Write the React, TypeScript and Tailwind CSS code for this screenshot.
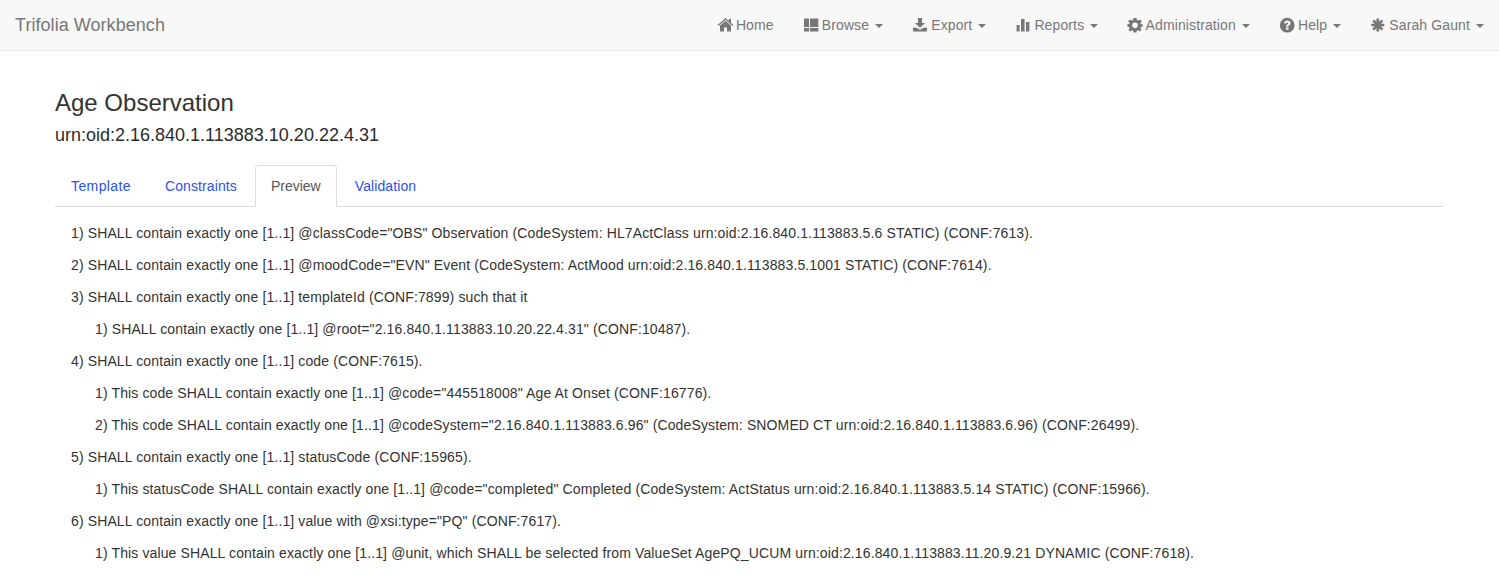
import type { ReactNode } from "react";

const sans = "font-['Liberation_Sans',Arial,sans-serif]";

function Glyph({ children }: { children: ReactNode }) {
  return (
    <svg viewBox="0 0 14 14" className="inline-block w-[14px] h-[14px] relative top-[1px] align-[-1px] fill-current overflow-visible">
      {children}
    </svg>
  );
}

const icons: Record<string, ReactNode> = {
  home: <path d="M7.5 0 L10.8 2.9 V1 H13 V4.9 L15.4 7 L14.6 8 L7.5 1.8 L0.4 8 L-0.4 7 Z M7.5 2.8 L13 7.6 V13.5 H9 V9.5 H6 V13.5 H2 V7.6 Z" />,
  browse: <path d="M0 0.5 H5 V9 H0 Z M6 0.5 H14.3 V9 H6 Z M0 10 H5 V13.5 H0 Z M6 10 H14.3 V13.5 H6 Z" />,
  export: <path d="M5 0 H9 V5 H12.2 L7 9.7 L1.8 5 H5 Z M0 9.8 H3.6 L7 12 L10.4 9.8 H14 V13.5 H0 Z" />,
  reports: <path d="M0.6 7 H3.6 V13.5 H0.6 Z M5 1 H8.6 V13.5 H5 Z M10 4 H13.4 V13.5 H10 Z" />,
  admin: (
    <path
      fillRule="evenodd"
      d="M5.5 0 H8.5 L8.9 2 L10.3 2.6 L12 1.4 L13.9 3.4 L12.4 4.9 L12.9 6 L14.6 6.2 V8.8 L12.9 9 L12.4 10.2 L13.6 11.7 L11.7 13.5 L10 12.2 L8.8 12.7 L8.5 14.4 H5.5 L5.2 12.7 L4 12.2 L2.3 13.5 L0.4 11.7 L1.6 10.2 L1.1 9 L-0.6 8.8 V6.2 L1.1 6 L1.6 4.9 L0.1 3.4 L2 1.4 L3.7 2.6 L5.1 2 Z M7 4.5 A2.8 2.8 0 1 0 7 10.1 A2.8 2.8 0 1 0 7 4.5 Z"
    />
  ),
  help: (
    <path
      fillRule="evenodd"
      d="M7.2 -0.2 A7.4 7.4 0 1 0 7.2 14.6 A7.4 7.4 0 1 0 7.2 -0.2 Z M7.3 2.6 C9.3 2.6 10.5 3.6 10.5 5.2 C10.5 6.3 9.9 6.9 9.1 7.4 C8.5 7.8 8.3 8 8.3 8.7 H6.1 C6.1 7.5 6.5 6.9 7.3 6.4 C7.9 6 8.2 5.8 8.2 5.3 C8.2 4.8 7.8 4.5 7.2 4.5 C6.6 4.5 6.2 4.9 6.1 5.6 L4 5.3 C4.2 3.6 5.4 2.6 7.3 2.6 Z M6 9.5 H8.4 V11.7 H6 Z"
    />
  ),
  user: <path stroke="currentColor" strokeWidth="2.7" d="M6.8 0.5 V13.5 M0.3 7 H13.3 M2.2 2.4 L11.4 11.6 M11.4 2.4 L2.2 11.6" />,
};

const navItems = [
  { label: "Home", icon: "home", caret: false },
  { label: "Browse", icon: "browse", caret: true },
  { label: "Export", icon: "export", caret: true },
  { label: "Reports", icon: "reports", caret: true },
  { label: "Administration", icon: "admin", caret: true },
  { label: "Help", icon: "help", caret: true },
  { label: "Sarah Gaunt", icon: "user", caret: true },
];

const rows: { text: string; nested?: boolean }[] = [
  { text: '1) SHALL contain exactly one [1..1] @classCode="OBS" Observation (CodeSystem: HL7ActClass urn:oid:2.16.840.1.113883.5.6 STATIC) (CONF:7613).' },
  { text: '2) SHALL contain exactly one [1..1] @moodCode="EVN" Event (CodeSystem: ActMood urn:oid:2.16.840.1.113883.5.1001 STATIC) (CONF:7614).' },
  { text: "3) SHALL contain exactly one [1..1] templateId (CONF:7899) such that it" },
  { text: '1) SHALL contain exactly one [1..1] @root="2.16.840.1.113883.10.20.22.4.31" (CONF:10487).', nested: true },
  { text: "4) SHALL contain exactly one [1..1] code (CONF:7615)." },
  { text: '1) This code SHALL contain exactly one [1..1] @code="445518008" Age At Onset (CONF:16776).', nested: true },
  { text: '2) This code SHALL contain exactly one [1..1] @codeSystem="2.16.840.1.113883.6.96" (CodeSystem: SNOMED CT urn:oid:2.16.840.1.113883.6.96) (CONF:26499).', nested: true },
  { text: "5) SHALL contain exactly one [1..1] statusCode (CONF:15965)." },
  { text: '1) This statusCode SHALL contain exactly one [1..1] @code="completed" Completed (CodeSystem: ActStatus urn:oid:2.16.840.1.113883.5.14 STATIC) (CONF:15966).', nested: true },
  { text: '6) SHALL contain exactly one [1..1] value with @xsi:type="PQ" (CONF:7617).' },
  { text: "1) This value SHALL contain exactly one [1..1] @unit, which SHALL be selected from ValueSet AgePQ_UCUM urn:oid:2.16.840.1.113883.11.20.9.21 DYNAMIC (CONF:7618).", nested: true },
];

// hinted widths in the screenshot differ per word, so tracking is set per tab
const tabs = [
  { label: "Template", tracking: "tracking-[0.4px]" },
  { label: "Constraints", tracking: "tracking-[0.1px]" },
  { label: "Preview", tracking: "tracking-normal" },
  { label: "Validation", tracking: "tracking-[0.1px]" },
];

export default function App() {
  return (
    <div className={`${sans} h-[580px] overflow-hidden bg-white text-[14px] leading-[20px] text-[#333]`}>
      <nav className="flex h-[51px] items-start justify-between border-b border-[#e7e7e7] bg-[#f8f8f8] text-[#777]">
        <a className="px-[15px] py-[15px] text-[18px] leading-[20px] tracking-[0.05px]">Trifolia Workbench</a>
        <ul className="flex tracking-[0.12px]">
          {navItems.map((item) => (
            <li key={item.label} className="whitespace-nowrap p-[15px]">
              <Glyph>{icons[item.icon]}</Glyph> {item.label}
              {item.caret && (
                <>
                  {" "}
                  <span className="ml-[2px] inline-block align-middle border-x-[4px] border-t-[4px] border-x-transparent border-t-[#777]" />
                </>
              )}
            </li>
          ))}
        </ul>
      </nav>

      <main className="px-[55px] pt-[39px]">
        <h1 className="text-[24px] leading-[26px] font-normal">Age Observation</h1>
        <h2 className="mt-[9px] text-[18px] leading-[20px] font-normal text-[#2b2b2b]">urn:oid:2.16.840.1.113883.10.20.22.4.31</h2>

        <ul className="mt-[20px] flex h-[42px] border-b border-[#ddd]">
          {tabs.map((tab) =>
            tab.label === "Preview" ? (
              <li key={tab.label} className={`mr-[2px] h-[42px] rounded-t-[4px] border border-[#ddd] border-b-white bg-white px-[15px] py-[10px] text-[#555] ${tab.tracking}`}>
                {tab.label}
              </li>
            ) : (
              <li key={tab.label} className={`mr-[2px] h-[41px] border border-transparent px-[15px] py-[10px] text-[#2a52f0] ${tab.tracking}`}>
                {tab.label}
              </li>
            ),
          )}
        </ul>

        <div className="mt-[16px] flex flex-col gap-[12px] pl-[16px] tracking-[0.125px]">
          {rows.map((row, i) => (
            <p key={i} className={`whitespace-nowrap ${row.nested ? "pl-[24px]" : ""}`}>
              {row.text}
            </p>
          ))}
        </div>
      </main>
    </div>
  );
}
